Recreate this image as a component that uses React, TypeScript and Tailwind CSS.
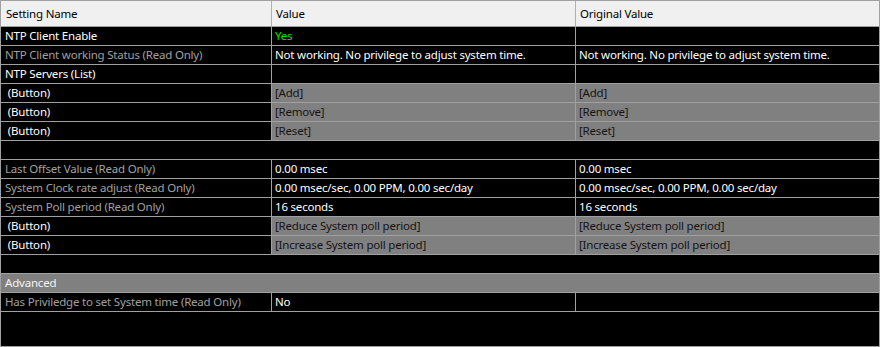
type Kind = "normal" | "readonly" | "button";

interface Row {
  name?: string;
  value?: string;
  original?: string;
  kind?: Kind;
  blank?: boolean;
  section?: boolean;
  green?: boolean;
}

const rows: Row[] = [
  { name: "NTP Client Enable", value: "Yes", original: "", green: true },
  {
    name: "NTP Client working Status (Read Only)",
    value: "Not working. No privilege to adjust system time.",
    original: "Not working. No privilege to adjust system time.",
    kind: "readonly",
  },
  { name: "NTP Servers (List)", value: "", original: "" },
  { name: " (Button)", value: "[Add]", original: "[Add]", kind: "button" },
  { name: " (Button)", value: "[Remove]", original: "[Remove]", kind: "button" },
  { name: " (Button)", value: "[Reset]", original: "[Reset]", kind: "button" },
  { blank: true },
  { name: "Last Offset Value (Read Only)", value: "0.00 msec", original: "0.00 msec", kind: "readonly" },
  {
    name: "System Clock rate adjust (Read Only)",
    value: "0.00 msec/sec, 0.00 PPM, 0.00 sec/day",
    original: "0.00 msec/sec, 0.00 PPM, 0.00 sec/day",
    kind: "readonly",
  },
  { name: "System Poll period (Read Only)", value: "16 seconds", original: "16 seconds", kind: "readonly" },
  {
    name: " (Button)",
    value: "[Reduce System poll period]",
    original: "[Reduce System poll period]",
    kind: "button",
  },
  {
    name: " (Button)",
    value: "[Increase System poll period]",
    original: "[Increase System poll period]",
    kind: "button",
  },
  { blank: true },
  { name: "Advanced", section: true },
  { name: "Has Priviledge to set System time (Read Only)", value: "No", original: "", kind: "readonly" },
];

const cols = "grid grid-cols-[271px_304px_1fr]";

const GridRow = ({ row }: { row: Row }) => {
  if (row.blank) {
    return <div className="h-[19px] border-b border-[#a0a0a0] bg-black" />;
  }
  if (row.section) {
    return (
      <div className="h-[19px] border-b border-[#a0a0a0] bg-[#808080] pl-[4px] leading-[18px] text-[#f4f4f4]">
        {row.name}
      </div>
    );
  }

  const nameColor = row.kind === "readonly" ? "text-[#a0a0a0]" : "text-white";
  const valueCls =
    row.kind === "button"
      ? "bg-[#808080] text-[#141414]"
      : row.green
        ? "bg-black text-[#00e000]"
        : "bg-black text-white";

  return (
    <div className={`${cols} h-[19px] border-b border-[#a0a0a0] leading-[18px]`}>
      <div className={`border-r border-[#a0a0a0] bg-black pl-[4px] whitespace-pre ${nameColor}`}>
        {row.name}
      </div>
      <div className={`border-r border-[#a0a0a0] pl-[3px] whitespace-pre ${valueCls}`}>{row.value}</div>
      <div className={`pl-[3px] whitespace-pre ${row.kind === "button" ? valueCls : "bg-black text-white"}`}>
        {row.original}
      </div>
    </div>
  );
};

export default function App() {
  return (
    <div
      className="h-[347px] w-[880px] overflow-hidden border border-[#a0a0a0] bg-black text-[11.5px] tracking-[-0.2px]"
      style={{ fontFamily: '"Noto Sans", "Open Sans", sans-serif' }}
    >
      <div className={`${cols} h-[26px] border-b border-[#a0a0a0] bg-[#f0f0f0] leading-[25px] text-black`}>
        <div className="border-r border-[#b0b0b0] pl-[5px]">Setting Name</div>
        <div className="border-r border-[#b0b0b0] pl-[4px]">Value</div>
        <div className="pl-[4px]">Original Value</div>
      </div>
      {rows.map((r, i) => (
        <GridRow key={i} row={r} />
      ))}
    </div>
  );
}
